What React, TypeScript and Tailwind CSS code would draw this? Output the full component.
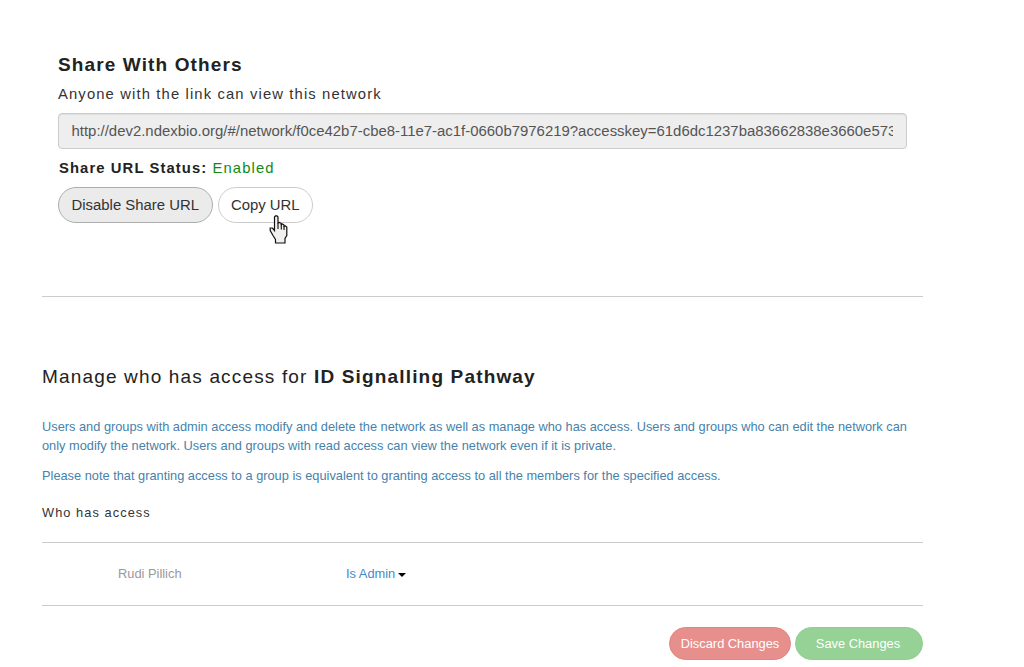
const shareUrl =
  'http://dev2.ndexbio.org/#/network/f0ce42b7-cbe8-11e7-ac1f-0660b7976219?accesskey=61d6dc1237ba83662838e3660e573'

function HandCursor() {
  return (
    <svg className="absolute left-[51px] top-[28px]" width="20" height="30" viewBox="0 0 20 30">
      <path
        d="M5.5 2 L6.5 .8 H8 L9 2 V8 L10.5 7.5 L12.3 8.5 V9.5 L13.5 9 L15 10 V11 L16.3 10.8 L17.8 12 V20.5 L16 23.5 V28 H6.5 V24.5 L4 20.5 L1.2 15.5 V13 H3.4 L5.5 15.5 Z"
        fill="#f1f0ee"
        stroke="#111"
        strokeWidth="1.2"
      />
      <path d="M9 8 V14 M12.3 9 V14.5 M15 11 V15" fill="none" stroke="#111" strokeWidth="1.1" />
    </svg>
  )
}

function ShareSection() {
  return (
    <section className="ml-[15.5px] h-[296px] w-[849px] pt-[52px]">
      <h2 className="ml-[0.5px] h-[26px] text-[19px] leading-[26px] font-bold tracking-[1.12px] text-[#222]">Share With Others</h2>
      <p className="mt-[5px] ml-[0.5px] h-[22px] text-[14.8px] leading-[22px] tracking-[1.13px] text-[#333]">
        Anyone with the link can view this network
      </p>
      <div className="mt-2 h-[36px] rounded-[4px] border border-[#ccc] bg-[#eee] px-[13px] shadow-[inset_0_1px_1px_rgba(0,0,0,0.075)]">
        <div className="overflow-hidden text-[14.93px] leading-[34px] whitespace-nowrap text-[#555]">{shareUrl}</div>
      </div>
      <p className="mt-2 ml-[1.5px] h-[22px] text-[14.8px] leading-[22px] tracking-[1.1px] text-[#222]">
        <b>Share URL Status:</b> <span className="text-[#128a12]">Enabled</span>
      </p>
      <div className="mt-2 flex gap-[4.5px] text-[14.9px] text-[#333]">
        <button className="h-[36px] w-[155.5px] rounded-full border border-[#adadad] bg-[#ebebeb] whitespace-nowrap">
          Disable Share URL
        </button>
        <div className="relative">
          <button className="h-[36px] w-[95.5px] rounded-full border border-[#ccc] bg-white whitespace-nowrap">Copy URL</button>
          <HandCursor />
        </div>
      </div>
    </section>
  )
}

function AccessSection() {
  return (
    <section className="border-t border-[#ccc] pt-[66px]">
      <h2 className="h-[28px] text-[19px] leading-[28px] tracking-[1.16px] whitespace-nowrap text-[#222]">
        Manage who has access for <b>ID Signalling Pathway</b>
      </h2>
      <div className="mt-[26px] text-[12.81px] leading-[19px] whitespace-nowrap text-[#4682ab]">
        <p>
          Users and groups with admin access modify and delete the network as well as manage who has access. Users and groups who can edit the network can
          <br />
          only modify the network. Users and groups with read access can view the network even if it is private.
        </p>
        <p className="mt-[11px]">
          Please note that granting access to a group is equivalent to granting access to all the members for the specified access.
        </p>
      </div>
      <h3 className="mt-[18px] h-[20px] text-[12.8px] leading-[20px] tracking-[1.06px] text-[#333]">Who has access</h3>
      <div className="mt-[19px] flex h-[64px] items-center border-y border-[#ccc] pl-[76px] text-[12.85px]">
        <span className="w-[228px] text-[#999]">Rudi Pillich</span>
        <span className="flex items-center gap-[2.5px] text-[#428bca]">
          Is Admin
          <span className="mt-[3px] border-x-[4.5px] border-t-[4.5px] border-x-transparent border-t-black" />
        </span>
      </div>
      <div className="mt-[21px] flex justify-end gap-[4px] text-[12.85px] text-white">
        <button className="h-[33px] w-[122px] rounded-full border border-[#e48481] bg-[#e68f8c] whitespace-nowrap">
          Discard Changes
        </button>
        <button className="h-[33px] w-[128px] rounded-full border border-[#8fce8f] bg-[#96d296] pr-[2px] whitespace-nowrap">
          Save Changes
        </button>
      </div>
    </section>
  )
}

export default function App() {
  return (
    <main className="h-[667px] overflow-hidden bg-white pl-[42px] font-['Liberation_Sans',Arial,sans-serif]">
      <div className="w-[881px]">
        <ShareSection />
        <AccessSection />
      </div>
    </main>
  )
}
